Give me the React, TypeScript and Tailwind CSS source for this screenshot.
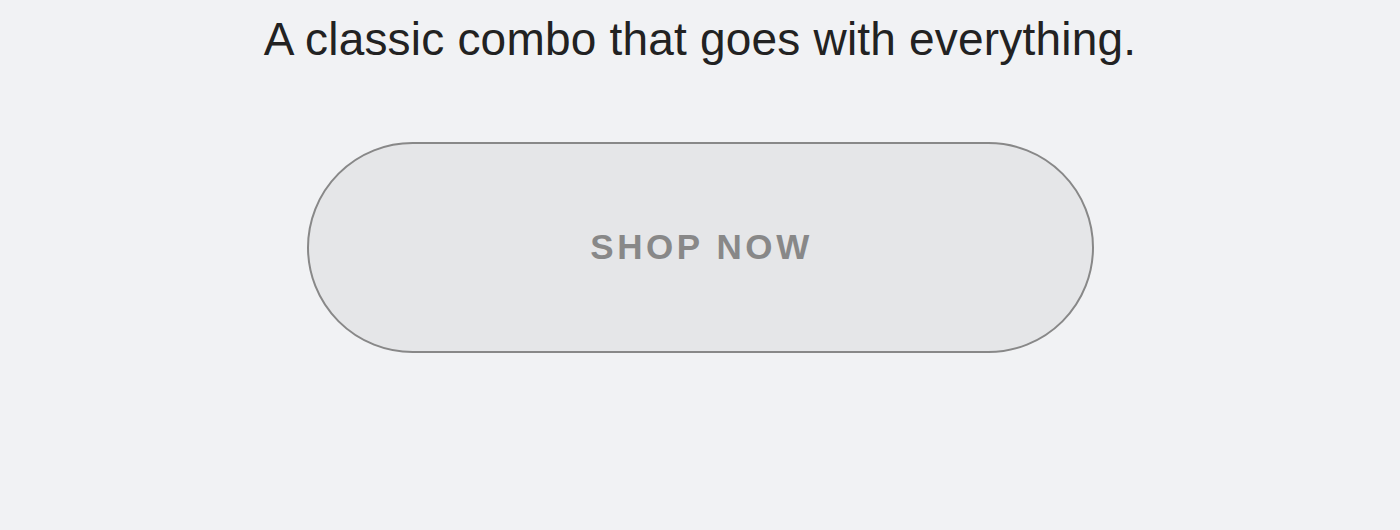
export default function App() {
  return (
    <div className="w-[1400px] h-[530px] bg-[#f1f2f4] flex flex-col items-center">
      <p className="mt-[11px] text-[46px] leading-[56px] text-[#222] font-['Liberation_Sans',Arial,sans-serif] tracking-[0.2px]">
        A classic combo that goes with everything.
      </p>
      <button className="mt-[75px] w-[787px] h-[211px] rounded-full border-2 border-[#888888] bg-[#e5e6e8] flex items-center justify-center">
        <span className="pl-[3px] text-[35px] font-bold tracking-[3.6px] text-[#888888] font-['Liberation_Sans',Arial,sans-serif]">
          SHOP NOW
        </span>
      </button>
    </div>
  );
}
